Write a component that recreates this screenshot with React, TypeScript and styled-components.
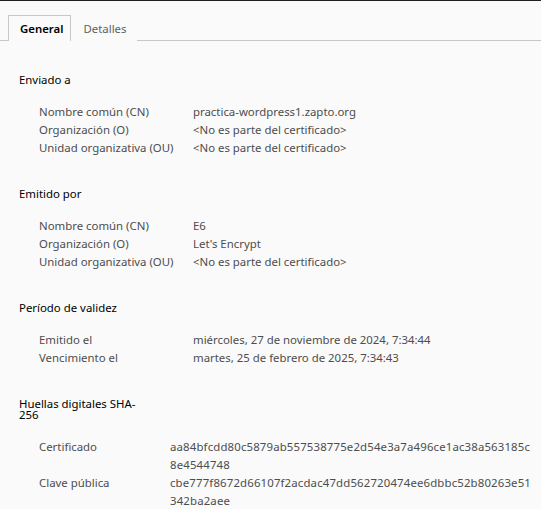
import React from "react";
import styled, { createGlobalStyle } from "styled-components";

const GlobalStyle = createGlobalStyle`
  html, body {
    margin: 0;
    padding: 0;
    background: #fafafa;
  }
  body {
    font-family: "Noto Sans", "Open Sans", sans-serif;
    font-size: 11.4px;
    color: #000;
  }
`;

const Page = styled.div`
  width: 541px;
  min-height: 509px;
  box-sizing: border-box;
  border-top: 1px solid #1f1f1f;
  background: #fafafa;
`;

const TabBar = styled.div`
  display: flex;
  align-items: flex-end;
  padding: 14px 0 0 8px;
  border-bottom: 1px solid #c8c8c8;
`;

const Tab = styled.div<{ $active?: boolean }>`
  height: 25px;
  display: flex;
  align-items: center;
  padding: ${(p) => (p.$active ? "0 7px 0 11px" : "0 10px 0 11px")};
  margin-bottom: -1px;
  box-sizing: content-box;
  border: 1px solid ${(p) => (p.$active ? "#c8c8c8" : "transparent")};
  border-bottom: none;
  background: #fafafa;
  color: ${(p) => (p.$active ? "#000" : "#5f5f5f")};
  font-weight: ${(p) => (p.$active ? 600 : 400)};
`;

const Content = styled.div`
  padding: 29px 0 0 19px;
  display: flex;
  flex-direction: column;
  gap: 27px;
`;

const Section = styled.section`
  display: flex;
  flex-direction: column;
  gap: 14px;
`;

const SectionTitle = styled.div`
  max-width: 122px;
  line-height: 11px;
  padding: 4px 0 4px;
  color: #000;
`;

const FieldGrid = styled.div<{ $labelWidth: number }>`
  display: grid;
  grid-template-columns: ${(p) => p.$labelWidth}px 1fr;
  padding-left: 20px;
  padding-right: 6px;
  line-height: 18px;
  color: #4d4d4d;
`;

const Label = styled.div``;

const Value = styled.div<{ $hash?: boolean }>`
  word-break: break-all;
  letter-spacing: ${(p) => (p.$hash ? "0.15px" : "normal")};
`;

type Field = [string, string];

const sections: { title: string; labelWidth: number; hash?: boolean; fields: Field[] }[] = [
  {
    title: "Enviado a",
    labelWidth: 154,
    fields: [
      ["Nombre común (CN)", "practica-wordpress1.zapto.org"],
      ["Organización (O)", "<No es parte del certificado>"],
      ["Unidad organizativa (OU)", "<No es parte del certificado>"],
    ],
  },
  {
    title: "Emitido por",
    labelWidth: 154,
    fields: [
      ["Nombre común (CN)", "E6"],
      ["Organización (O)", "Let's Encrypt"],
      ["Unidad organizativa (OU)", "<No es parte del certificado>"],
    ],
  },
  {
    title: "Período de validez",
    labelWidth: 154,
    fields: [
      ["Emitido el", "miércoles, 27 de noviembre de 2024, 7:34:44"],
      ["Vencimiento el", "martes, 25 de febrero de 2025, 7:34:43"],
    ],
  },
  {
    title: "Huellas digitales SHA-256",
    labelWidth: 131,
    hash: true,
    fields: [
      ["Certificado", "aa84bfcdd80c5879ab557538775e2d54e3a7a496ce1ac38a563185c8e4544748"],
      ["Clave pública", "cbe777f8672d66107f2acdac47dd562720474ee6dbbc52b80263e51342ba2aee"],
    ],
  },
];

export default function App() {
  return (
    <>
      <GlobalStyle />
      <Page>
        <TabBar>
          <Tab $active>General</Tab>
          <Tab>Detalles</Tab>
        </TabBar>
        <Content>
          {sections.map((s) => (
            <Section key={s.title}>
              <SectionTitle>{s.title}</SectionTitle>
              <FieldGrid $labelWidth={s.labelWidth}>
                {s.fields.map(([l, v]) => (
                  <React.Fragment key={l}>
                    <Label>{l}</Label>
                    <Value $hash={s.hash}>{v}</Value>
                  </React.Fragment>
                ))}
              </FieldGrid>
            </Section>
          ))}
        </Content>
      </Page>
    </>
  );
}
